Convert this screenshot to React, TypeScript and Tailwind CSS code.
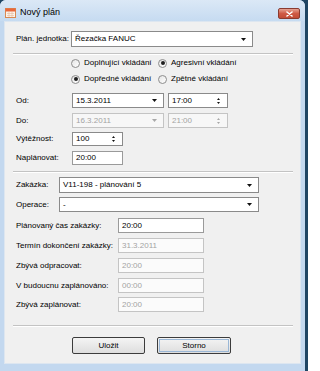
const font = { fontFamily: '"Liberation Sans", Arial, sans-serif' };

const Arrow = ({ disabled }: { disabled?: boolean }) => (
  <svg width="5" height="3" viewBox="0 0 5 3" className="shrink-0">
    <path d="M0 0h5L2.5 3z" fill={disabled ? "#a8a8a8" : "#111"} />
  </svg>
);

const Spin = ({ disabled }: { disabled?: boolean }) => (
  <div className="flex flex-col gap-[2px] shrink-0">
    <svg width="3" height="2" viewBox="0 0 3 2">
      <path d="M0 2h3L1.5 0z" fill={disabled ? "#a8a8a8" : "#111"} />
    </svg>
    <svg width="3" height="2" viewBox="0 0 3 2">
      <path d="M0 0h3L1.5 2z" fill={disabled ? "#a8a8a8" : "#111"} />
    </svg>
  </div>
);

const Combo = ({ value, w, h = 15, disabled }: { value: string; w: string; h?: number; disabled?: boolean }) => (
  <div
    className={`${w} flex items-center justify-between pl-[3px] pr-[6px] border ${
      disabled ? "border-[#c4c4c4] bg-[#f7f7f7] text-[#a3a3a3]" : "border-[#8a8a8a] bg-white text-black"
    }`}
    style={{ height: h }}
  >
    <span>{value}</span>
    <Arrow disabled={disabled} />
  </div>
);

const Spinner = ({ value, w, disabled }: { value: string; w: string; disabled?: boolean }) => (
  <div
    className={`${w} h-full flex items-center justify-between pl-[3px] pr-[7px] border ${
      disabled ? "border-[#c4c4c4] bg-[#f7f7f7] text-[#a3a3a3]" : "border-[#8a8a8a] bg-white text-black"
    }`}
  >
    <span>{value}</span>
    <Spin disabled={disabled} />
  </div>
);

const TextBox = ({ value, w, disabled }: { value: string; w: string; disabled?: boolean }) => (
  <div
    className={`${w} h-full flex items-center pl-[3px] border ${
      disabled ? "border-[#c4c4c4] bg-[#fbfbfb] text-[#a3a3a3]" : "border-[#9a9a9a] bg-white text-black"
    }`}
  >
    {value}
  </div>
);

const Radio = ({ label, checked }: { label: string; checked?: boolean }) => (
  <div className="flex items-center gap-[4px]">
    <span className="w-[9px] h-[9px] rounded-full border border-[#8d8d8d] bg-gradient-to-br from-[#e4e4e4] to-white flex items-center justify-center">
      {checked && <span className="w-[4px] h-[4px] rounded-full bg-[#1e1e1e]" />}
    </span>
    <span>{label}</span>
  </div>
);

const Separator = ({ mt }: { mt: string }) => (
  <div className={`${mt} ml-[8px] w-[280px] h-[2px] border-t border-[#c3c3c3] border-b border-b-white`} />
);

export default function App() {
  return (
    <div className="w-[308px] h-[371px] bg-[#1f4563] text-[8px] leading-none text-black" style={font}>
      <div className="w-[305px] h-full rounded-t-[6px] bg-[#c3d8ef] flex flex-col">
        {/* Title bar */}
        <div className="h-[21px] flex justify-between rounded-t-[6px] bg-gradient-to-b from-[#dbe8f6] to-[#c6dbf1]">
          <div className="flex items-center gap-[4px] pl-[5px] pt-[4px]">
            <svg width="11" height="10" viewBox="0 0 11 10">
              <rect x="0.5" y="0.5" width="10" height="9" fill="#fbf3ea" stroke="#d98a53" />
              <rect x="0.5" y="0.5" width="10" height="3" fill="#e8673a" />
              <path d="M2 5.5h7M2 7.5h7M4 4v5M7 4v5" stroke="#e6b99a" strokeWidth="0.6" />
            </svg>
            <span className="text-[9px]">Nový plán</span>
          </div>
          <div className="mt-[8px] mr-[5px] w-[22px] h-[11px] rounded-[2px] border border-[#8a3b30] bg-gradient-to-b from-[#e4a293] via-[#cf5a45] to-[#c24b35] flex items-center justify-center">
            <svg width="7" height="6" viewBox="0 0 7 6">
              <path d="M1 1l5 4M6 1l-5 4" stroke="#fff" strokeWidth="1.6" strokeLinecap="round" />
            </svg>
          </div>
        </div>

        {/* Client area */}
        <div className="ml-[4px] mr-[4px] h-[343px] bg-[#f0f0f0] border border-[#dde6f0] flex flex-col">
          <div className="mt-[9px] h-[16px] flex items-center pl-[11px]">
            <span className="w-[55px]">Plán. jednotka:</span>
            <Combo value="Řezačka FANUC" w="w-[182px]" h={16} />
          </div>

          <Separator mt="mt-[6px]" />

          <div className="mt-[1px] h-[14px] flex items-center pl-[66px]">
            <div className="w-[87px]">
              <Radio label="Doplňující vkládání" />
            </div>
            <Radio label="Agresivní vkládání" checked />
          </div>
          <div className="mt-[2px] h-[14px] flex items-center pl-[66px]">
            <div className="w-[87px]">
              <Radio label="Dopředné vkládání" checked />
            </div>
            <Radio label="Zpětné vkládání" />
          </div>

          <div className="mt-[7px] h-[15px] flex items-center pl-[11px]">
            <span className="w-[56px]">Od:</span>
            <Combo value="15.3.2011" w="w-[92px]" />
            <div className="ml-[4px] h-full">
              <Spinner value="17:00" w="w-[60px]" />
            </div>
          </div>
          <div className="mt-[5px] h-[15px] flex items-center pl-[11px]">
            <span className="w-[56px]">Do:</span>
            <Combo value="16.3.2011" w="w-[92px]" disabled />
            <div className="ml-[4px] h-full">
              <Spinner value="21:00" w="w-[60px]" disabled />
            </div>
          </div>
          <div className="mt-[4px] h-[14px] flex items-center pl-[11px]">
            <span className="w-[56px]">Výtěžnost:</span>
            <Spinner value="100" w="w-[51px]" />
          </div>
          <div className="mt-[5px] h-[14px] flex items-center pl-[11px]">
            <span className="w-[56px]">Naplánovat:</span>
            <TextBox value="20:00" w="w-[51px]" />
          </div>

          <Separator mt="mt-[6px]" />

          <div className="mt-[4px] h-[16px] flex items-center pl-[11px]">
            <span className="w-[43px]">Zakázka:</span>
            <Combo value="V11-198 - plánování 5" w="w-[200px]" h={16} />
          </div>
          <div className="mt-[4px] h-[15px] flex items-center pl-[11px]">
            <span className="w-[43px]">Operace:</span>
            <Combo value="-" w="w-[200px]" />
          </div>

          {[
            { label: "Plánovaný čas zakázky:", value: "20:00", mt: "mt-[6px]" },
            { label: "Termín dokončení zakázky:", value: "31.3.2011", mt: "mt-[5px]", disabled: true },
            { label: "Zbývá odpracovat:", value: "20:00", mt: "mt-[5px]", disabled: true },
            { label: "V budoucnu zaplánováno:", value: "00:00", mt: "mt-[5px]", disabled: true },
            { label: "Zbývá zaplánovat:", value: "20:00", mt: "mt-[4px]", disabled: true },
          ].map((r) => (
            <div key={r.label} className={`${r.mt} h-[15px] flex items-center pl-[11px]`}>
              <span className="w-[102px]">{r.label}</span>
              <TextBox value={r.value} w="w-[86px]" disabled={r.disabled} />
            </div>
          ))}

          <Separator mt="mt-[13px]" />

          <div className="mt-[10px] h-[17px] flex pl-[67px] gap-[12px]">
            <button className="w-[73px] h-full border border-[#3c3c3c] rounded-[2px] bg-gradient-to-b from-[#f4f4f4] to-[#dedede] flex items-center justify-center">
              Uložit
            </button>
            <button className="w-[74px] h-full border border-[#3c3c3c] rounded-[2px] bg-gradient-to-b from-[#f4f4f4] to-[#dedede] p-[1px]">
              <span className="w-full h-full flex items-center justify-center border border-[#9ab7d6]">
                Storno
              </span>
            </button>
          </div>
        </div>
      </div>
    </div>
  );
}
